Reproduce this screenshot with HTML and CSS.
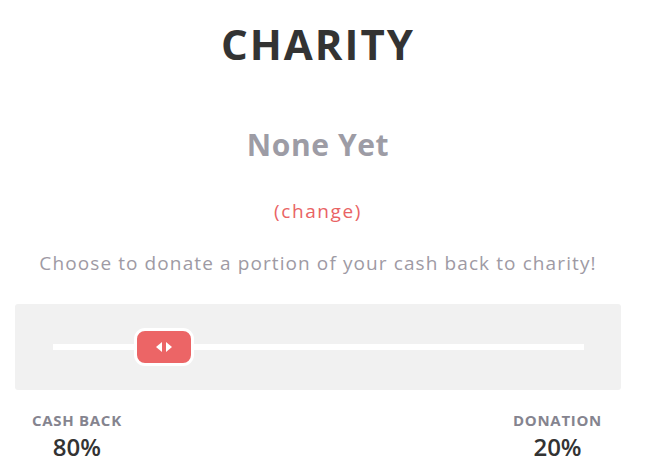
FILE: index.html
```html
<!DOCTYPE html>
<html lang="en">
<head>
    <meta charset="UTF-8">
    <meta name="viewport" content="width=device-width, initial-scale=1.0">
    <title>Charity</title>
    <link rel="stylesheet" href="styles.css">
</head>
<body>
    <div class="charity">
        <h1>CHARITY</h1>
        <h2 class="charity-name">None Yet</h2>
        <a class="change-link" href="#">(change)</a>
        <p class="intro">Choose to donate a portion of your cash back to charity!</p>

        <div class="slider-panel">
            <div class="slider-track">
                <div class="slider-handle">
                    <span class="arrow arrow-left"></span>
                    <span class="arrow arrow-right"></span>
                </div>
            </div>
        </div>

        <div class="split">
            <div class="split-item">
                <div class="split-label">CASH BACK</div>
                <div class="split-value">80%</div>
            </div>
            <div class="split-item">
                <div class="split-label">DONATION</div>
                <div class="split-value">20%</div>
            </div>
        </div>
    </div>
</body>
</html>
```

FILE: styles.css
```css
body {
    font-family: "Open Sans", Arial, sans-serif;
    margin: 0;
    padding: 0 40px 0 15px;
    background: #fff;
}
.charity {
    width: 606px;
    text-align: center;
}
h1 {
    margin: 0;
    padding-top: 14px;
    font-size: 42px;
    font-weight: 700;
    letter-spacing: 2px;
    color: #333;
    line-height: 60px;
}
.charity-name {
    margin: 54px 0 0;
    font-size: 30px;
    font-weight: 700;
    letter-spacing: 0.6px;
    color: #9d9ca5;
    line-height: 34px;
}
.change-link {
    display: block;
    margin-top: 37px;
    font-size: 19px;
    letter-spacing: 1.6px;
    color: #e96364;
    text-decoration: none;
    line-height: 24px;
}
.intro {
    margin: 27px 0 0;
    font-size: 19px;
    letter-spacing: 1.1px;
    color: #9e9aa4;
    line-height: 26px;
}
.slider-panel {
    margin-top: 28px;
    height: 86px;
    background: #f1f1f1;
    border-radius: 3px;
    display: flex;
    align-items: center;
    padding: 0 37px 0 38px;
}
.slider-track {
    position: relative;
    flex: 1;
    height: 6px;
    background: #fff;
}
.slider-handle {
    position: absolute;
    left: 81px;
    top: -16px;
    width: 54px;
    height: 32px;
    background: #ec6566;
    border: 3px solid #fff;
    border-radius: 11px;
    display: flex;
    align-items: center;
    justify-content: center;
    gap: 4px;
}
.arrow {
    width: 0;
    height: 0;
    border-top: 5px solid transparent;
    border-bottom: 5px solid transparent;
}
.arrow-left {
    border-right: 6px solid #fff;
}
.arrow-right {
    border-left: 6px solid #fff;
}
.split {
    display: flex;
    justify-content: space-between;
    padding: 0 19px 0 17px;
    margin-top: 20px;
}
.split-item {
    text-align: center;
}
.split-label {
    font-size: 15px;
    font-weight: 700;
    color: #85848f;
    letter-spacing: 0.7px;
    line-height: 20px;
}
.split-value {
    margin-top: 3px;
    font-size: 24px;
    font-weight: 600;
    color: #333;
    line-height: 28px;
}
```
